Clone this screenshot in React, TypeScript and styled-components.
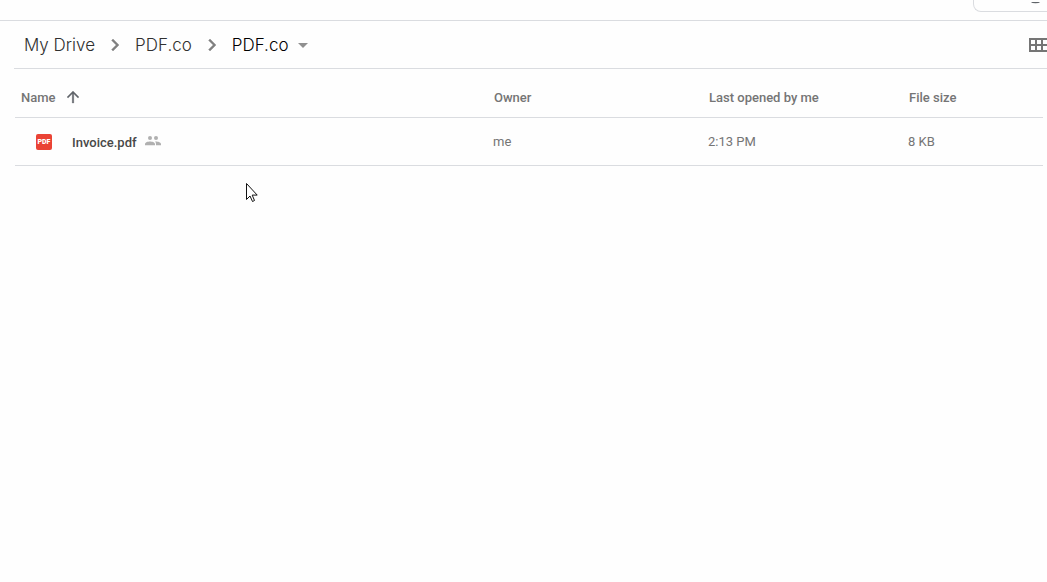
import React from 'react';
import styled, { createGlobalStyle } from 'styled-components';

const GlobalStyle = createGlobalStyle`
  *, *::before, *::after { box-sizing: border-box; }
  html { background: #fefefe; }
  body {
    margin: 0;
    background: #fefefe;
    font-family: Roboto, "Liberation Sans", sans-serif;
    font-size: 13px;
    color: #757575;
    overflow-x: hidden;
  }
`;

const Page = styled.div`
  position: relative;
  min-height: 100vh;
`;

const TopBar = styled.header`
  display: flex;
  justify-content: flex-end;
  align-items: flex-start;
  height: 21px;
  border-bottom: 1px solid #dadce0;
  overflow: hidden;
`;

const SearchPanel = styled.div`
  width: 74px;
  height: 12px;
  padding-left: 56px;
  border: 1px solid #dadce0;
  border-width: 0 0 1px 1px;
  border-bottom-left-radius: 8px;
  line-height: 0;
`;

const PathBar = styled.div`
  display: flex;
  align-items: center;
  justify-content: space-between;
  height: 48px;
  margin-left: 14px;
  border-bottom: 1px solid #dadce0;
`;

const Crumbs = styled.nav`
  display: flex;
  align-items: center;
  padding-left: 10px;
`;

const Crumb = styled.a<{ $current?: boolean }>`
  font-family: Inter, "Open Sans", sans-serif;
  font-size: 17px;
  font-weight: 300;
  line-height: 24px;
  text-decoration: none;
  color: ${(p) => (p.$current ? '#000' : '#303030')};
`;

const Separator = styled.svg`
  width: 24px;
  height: 24px;
  margin: 0 8px;
  fill: #808080;
`;

const IconButton = styled.button`
  display: flex;
  padding: 0;
  border: 0;
  background: none;
  overflow: hidden;
`;

const FolderMenuButton = styled(IconButton)`
  margin-left: 2px;
`;

const FileTable = styled.table`
  width: calc(100% - 19px);
  margin-left: 15px;
  table-layout: fixed;
  border-collapse: separate;
  border-spacing: 0;
`;

const HeadCell = styled.th<{ $width?: number; $first?: boolean }>`
  width: ${(p) => (p.$width ? `${p.$width}px` : 'auto')};
  height: 49px;
  padding: 10px 0 0 ${(p) => (p.$first ? 6 : 1)}px;
  border-bottom: 1px solid #dadce0;
  font-weight: 500;
  text-align: left;
  line-height: 16px;
  white-space: nowrap;
`;

const Cell = styled.td`
  height: 48px;
  padding: 0;
  border-bottom: 1px solid #dadce0;
  line-height: 16px;
`;

const SortButton = styled.button`
  display: flex;
  align-items: center;
  gap: 8px;
  padding: 0;
  border: 0;
  background: none;
  font: inherit;
  color: inherit;

  svg {
    margin-bottom: 2px;
  }
`;

const FileName = styled.div`
  display: flex;
  align-items: center;
  padding-left: 21px;
`;

const PdfBadge = styled.span`
  display: flex;
  align-items: center;
  justify-content: center;
  width: 16px;
  height: 16px;
  border-radius: 2px;
  background: #ea4335;
  color: #fff;
  font-size: 7px;
  font-weight: 900;
  line-height: 8px;
`;

const FileLabel = styled.span`
  margin: 0 8px 0 20px;
  padding-top: 2px;
  font-weight: 500;
  color: #484848;
`;

const SharedIcon = styled.svg`
  width: 16px;
  height: 10px;
  margin-bottom: 2px;
  fill: #b0b0b0;
`;

const Pointer = styled.svg`
  position: absolute;
  left: 246px;
  top: 183px;
`;

const Chevron = () => (
  <Separator viewBox="0 0 24 24" aria-hidden="true">
    <path d="M10 6L8.59 7.41 13.17 12l-4.58 4.59L10 18l6-6z" stroke="#808080" strokeWidth="0.4" />
  </Separator>
);

export default function App() {
  return (
    <Page>
      <GlobalStyle />
      <TopBar>
        <SearchPanel>
          <svg width="12" height="2" viewBox="0 0 12 2" aria-hidden="true">
            <ellipse cx="5.5" cy="-1" rx="5" ry="2.2" fill="#5f6368" />
          </svg>
        </SearchPanel>
      </TopBar>
      <PathBar>
        <Crumbs aria-label="Folder path">
          <Crumb href="#drive">My Drive</Crumb>
          <Chevron />
          <Crumb href="#parent">PDF.co</Crumb>
          <Chevron />
          <Crumb href="#folder" $current>PDF.co</Crumb>
          <FolderMenuButton aria-label="Folder actions">
            <svg width="24" height="24" viewBox="0 0 24 24">
              <path d="M7 10l5 5 5-5z" fill="#909090" />
            </svg>
          </FolderMenuButton>
        </Crumbs>
        <IconButton aria-label="Grid view">
          <svg width="18" height="14" viewBox="0 0 18 14">
            <path
              fill="#757575"
              fillRule="evenodd"
              d="M0 0h20v14H0zM2 2v4h4V2zM8 2v4h4V2zM14 2v4h4V2zM2 8v4h4V8zM8 8v4h4V8zM14 8v4h4V8z"
            />
          </svg>
        </IconButton>
      </PathBar>
      <FileTable>
        <thead>
          <tr>
            <HeadCell $first>
              <SortButton>
                Name
                <svg width="18" height="18" viewBox="0 0 24 24" aria-hidden="true">
                  <path d="M4 12l1.410 1.410L11 7.830V20h2V7.830l5.580 5.590L20 12l-8-8-8 8z" fill="#5f6368" stroke="#5f6368" strokeWidth="0.4" />
                </svg>
              </SortButton>
            </HeadCell>
            <HeadCell $width={215}>Owner</HeadCell>
            <HeadCell $width={200}>Last opened by me</HeadCell>
            <HeadCell $width={135}>File size</HeadCell>
          </tr>
        </thead>
        <tbody>
          <tr>
            <Cell>
              <FileName>
                <PdfBadge>PDF</PdfBadge>
                <FileLabel>Invoice.pdf</FileLabel>
                <SharedIcon viewBox="0 0 16 10" role="img" aria-label="Shared">
                  <circle cx="5" cy="2" r="2" />
                  <circle cx="11" cy="2" r="2" />
                  <path d="M0 9.300V8c0-1.700 3-2.500 5-2.500s5 .8 5 2.500v1.300zM11 9.300V8c0-1-.4-1.700-1-2.400 2.500-.2 6 .7 6 2.400v1.300z" />
                </SharedIcon>
              </FileName>
            </Cell>
            <Cell>me</Cell>
            <Cell>2:13 PM</Cell>
            <Cell>8 KB</Cell>
          </tr>
        </tbody>
      </FileTable>
      <Pointer width="12" height="20" viewBox="0 0 12 20" aria-hidden="true">
        <path d="M.5.5v16l3.500-3.500 2.500 5.500 2-1-2.300-5.400h5z" fill="#fff" stroke="#111" />
      </Pointer>
    </Page>
  );
}
